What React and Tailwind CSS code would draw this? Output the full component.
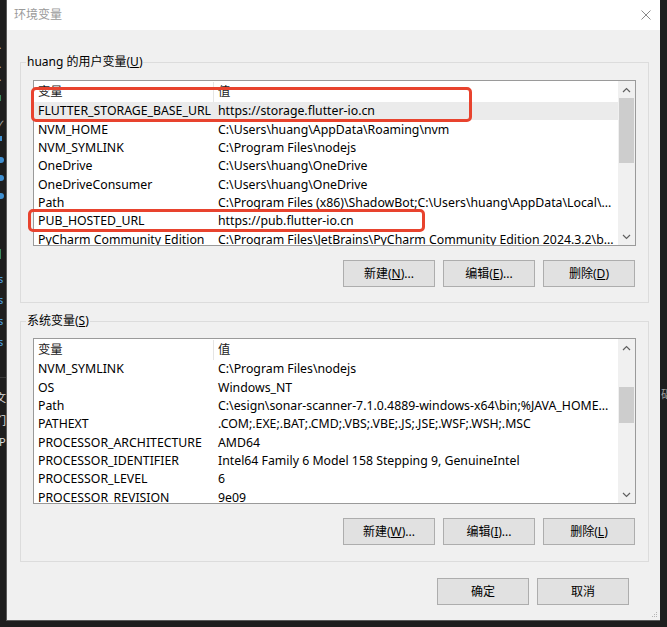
import React from "react";

const userVars = [
  ["FLUTTER_STORAGE_BASE_URL", "https://storage.flutter-io.cn"],
  ["NVM_HOME", "C:\\Users\\huang\\AppData\\Roaming\\nvm"],
  ["NVM_SYMLINK", "C:\\Program Files\\nodejs"],
  ["OneDrive", "C:\\Users\\huang\\OneDrive"],
  ["OneDriveConsumer", "C:\\Users\\huang\\OneDrive"],
  ["Path", "C:\\Program Files (x86)\\ShadowBot;C:\\Users\\huang\\AppData\\Local\\..."],
  ["PUB_HOSTED_URL", "https://pub.flutter-io.cn"],
  ["PyCharm Community Edition", "C:\\Program Files\\JetBrains\\PyCharm Community Edition 2024.3.2\\b..."],
];

const sysVars = [
  ["NVM_SYMLINK", "C:\\Program Files\\nodejs"],
  ["OS", "Windows_NT"],
  ["Path", "C:\\esign\\sonar-scanner-7.1.0.4889-windows-x64\\bin;%JAVA_HOME..."],
  ["PATHEXT", ".COM;.EXE;.BAT;.CMD;.VBS;.VBE;.JS;.JSE;.WSF;.WSH;.MSC"],
  ["PROCESSOR_ARCHITECTURE", "AMD64"],
  ["PROCESSOR_IDENTIFIER", "Intel64 Family 6 Model 158 Stepping 9, GenuineIntel"],
  ["PROCESSOR_LEVEL", "6"],
  ["PROCESSOR_REVISION", "9e09"],
];

function Chevron({ down }) {
  return (
    <svg width="9" height="6" viewBox="0 0 9 6">
      <polyline
        points={down ? "1,1 4.5,4.5 8,1" : "1,5 4.5,1.5 8,5"}
        fill="none"
        stroke="#606060"
        strokeWidth="1.2"
      />
    </svg>
  );
}

function ScrollBar({ thumbClass }) {
  return (
    <div className="flex w-[17px] flex-col bg-[#f0f0f0]">
      <div className="flex h-[17px] items-center justify-center">
        <Chevron />
      </div>
      <div className="flex-1">
        <div className={`mx-[1px] bg-[#cdcdcd] ${thumbClass}`} />
      </div>
      <div className="flex h-[17px] items-center justify-center">
        <Chevron down />
      </div>
    </div>
  );
}

function ListView({ rows, selected, thumbClass }) {
  return (
    <div className="flex h-[166px] border border-[#9a9a9a] bg-white">
      <div className="flex-1 overflow-hidden">
        {/* header */}
        <div className="flex h-[21px] items-center pt-[1px] text-[#1a1a1a]">
          <div className="w-[180px] border-r border-[#e5e5e5] pl-[4px] leading-[20px]">变量</div>
          <div className="pl-[4px]">值</div>
        </div>
        {rows.map(([name, value], i) => (
          <div
            key={name}
            className={`flex h-[18.3px] items-center whitespace-nowrap pt-[1px] ${
              i === selected ? "bg-[#ebebeb]" : ""
            }`}
          >
            <div className="w-[180px] overflow-hidden pl-[4px]">{name}</div>
            <div className="flex-1 overflow-hidden pl-[4px]">{value}</div>
          </div>
        ))}
      </div>
      <ScrollBar thumbClass={thumbClass} />
    </div>
  );
}

function Btn({ children }) {
  return (
    <button className="flex h-[27px] w-[92px] items-center justify-center border border-[#adadad] bg-[#e1e1e1] text-[12px] text-black">
      {children}
    </button>
  );
}

function Group({ label, children, className }) {
  return (
    <fieldset className={`w-[629px] border border-[#dcdcdc] ${className}`}>
      <legend className="ml-[5px] px-[1px] text-[12px] leading-[16px] text-black">{label}</legend>
      {children}
    </fieldset>
  );
}

export default function App() {
  return (
    <div className="relative flex h-[627px] w-[667px] overflow-hidden bg-[#1e1e1e] font-['Noto_Sans','Noto_Sans_CJK_SC',sans-serif] text-[12.3px] text-black">
      {/* editor behind, left edge */}
      <div className="flex w-[6px] flex-col overflow-hidden pt-[42px] text-[11px] leading-none">
        <span className="-ml-[5px] text-[#cccccc]">&gt;</span>
        <span className="-ml-[5px] mt-[8px] text-[#cccccc]">&gt;</span>
        <span className="-ml-[5px] mt-[2px] text-[#cccccc]">&gt;</span>
        <div className="mt-[10px] h-[6px] w-[1px] bg-[#3c8a5a]" />
        <span className="-ml-[4px] mt-[18px] text-[#aaaaaa]">✓</span>
        <div className="mt-[6px] h-[5px] w-[2px] bg-[#3f8fd0]" />
        <div className="mt-[16px] h-[6px] w-[4px] rounded-r-full bg-[#3f8fd0]" />
        <div className="mt-[12px] h-[6px] w-[4px] rounded-r-full bg-[#3f8fd0]" />
        <div className="mt-[12px] h-[6px] w-[4px] rounded-r-full bg-[#3f8fd0]" />
        <div className="mt-[50px] h-[10px] w-[1px] bg-[#3c8a5a]" />
        <span className="-ml-[2px] mt-[14px] text-[#4fa3e0]">s</span>
        <span className="-ml-[2px] mt-[10px] text-[#4fa3e0]">s</span>
        <span className="-ml-[2px] mt-[10px] text-[#4fa3e0]">s</span>
        <span className="-ml-[2px] mt-[10px] text-[#4fa3e0]">s</span>
        <div className="mt-[30px] h-[1px] w-[6px] bg-[#3a3a3a]" />
        <span className="-ml-[5px] mt-[14px] text-[#dddddd]">文</span>
        <span className="-ml-[5px] mt-[12px] text-[#dddddd]">们</span>
        <span className="-ml-[1px] mt-[10px] text-[#dddddd]">P</span>
      </div>

      {/* dialog */}
      <div className="relative flex h-[621px] w-[654px] flex-col border-b border-l border-[#5a5a5a]">
        <div className="flex h-[30px] items-center justify-between bg-white pl-[7px] pr-[9px]">
          <span className="text-[12px] text-[#9a9a9a]">环境变量</span>
          <svg width="10" height="10" viewBox="0 0 10 10">
            <path d="M0.5 0.5 L9.5 9.5 M9.5 0.5 L0.5 9.5" stroke="#8a8a8a" strokeWidth="1" />
          </svg>
        </div>

        <div className="flex flex-1 flex-col bg-[#f0f0f0] pl-[13px] pr-[11px] pt-[24px]">
          <Group label={<>huang 的用户变量(<u>U</u>)</>} className="pb-[15px]">
            <div className="px-[12px] pt-[10px]">
              <ListView rows={userVars} selected={0} thumbClass="mt-[0px] h-[65px]" />
              <div className="mt-[14px] flex justify-end gap-[8px] pr-[1px]">
                <Btn>新建(<u>N</u>)...</Btn>
                <Btn>编辑(<u>E</u>)...</Btn>
                <Btn>删除(<u>D</u>)</Btn>
              </div>
            </div>
          </Group>

          <Group label={<>系统变量(<u>S</u>)</>} className="mt-[10px] pb-[16px]">
            <div className="px-[12px] pt-[9px]">
              <ListView rows={sysVars} selected={-1} thumbClass="mt-[31px] h-[36px]" />
              <div className="mt-[14px] flex justify-end gap-[8px] pr-[1px]">
                <Btn>新建(<u>W</u>)...</Btn>
                <Btn>编辑(<u>I</u>)...</Btn>
                <Btn>删除(<u>L</u>)</Btn>
              </div>
            </div>
          </Group>

          <div className="mt-[16px] flex justify-end gap-[8px] pr-[20px]">
            <Btn>确定</Btn>
            <Btn>取消</Btn>
          </div>
        </div>

        {/* size grip */}
        <svg className="absolute bottom-[2px] right-[2px]" width="7" height="7" viewBox="0 0 7 7">
          <g fill="#b5b5b5">
            <rect x="5" y="1" width="1" height="1" />
            <rect x="3" y="3" width="1" height="1" />
            <rect x="5" y="3" width="1" height="1" />
            <rect x="1" y="5" width="1" height="1" />
            <rect x="3" y="5" width="1" height="1" />
            <rect x="5" y="5" width="1" height="1" />
          </g>
        </svg>
      </div>

      {/* editor behind, right edge */}
      <div className="flex flex-1 flex-col overflow-hidden pt-[386px] text-[12px]">
        <span className="ml-[1px] text-[#9a9a9a]">础</span>
      </div>

      {/* red annotation boxes */}
      <div className="absolute left-[31px] top-[87px] h-[35px] w-[441px] rounded-[5px] border-[3px] border-[#e8432e]" />
      <div className="absolute left-[28px] top-[209px] h-[23px] w-[397px] rounded-[5px] border-[3px] border-[#e8432e]" />
    </div>
  );
}
